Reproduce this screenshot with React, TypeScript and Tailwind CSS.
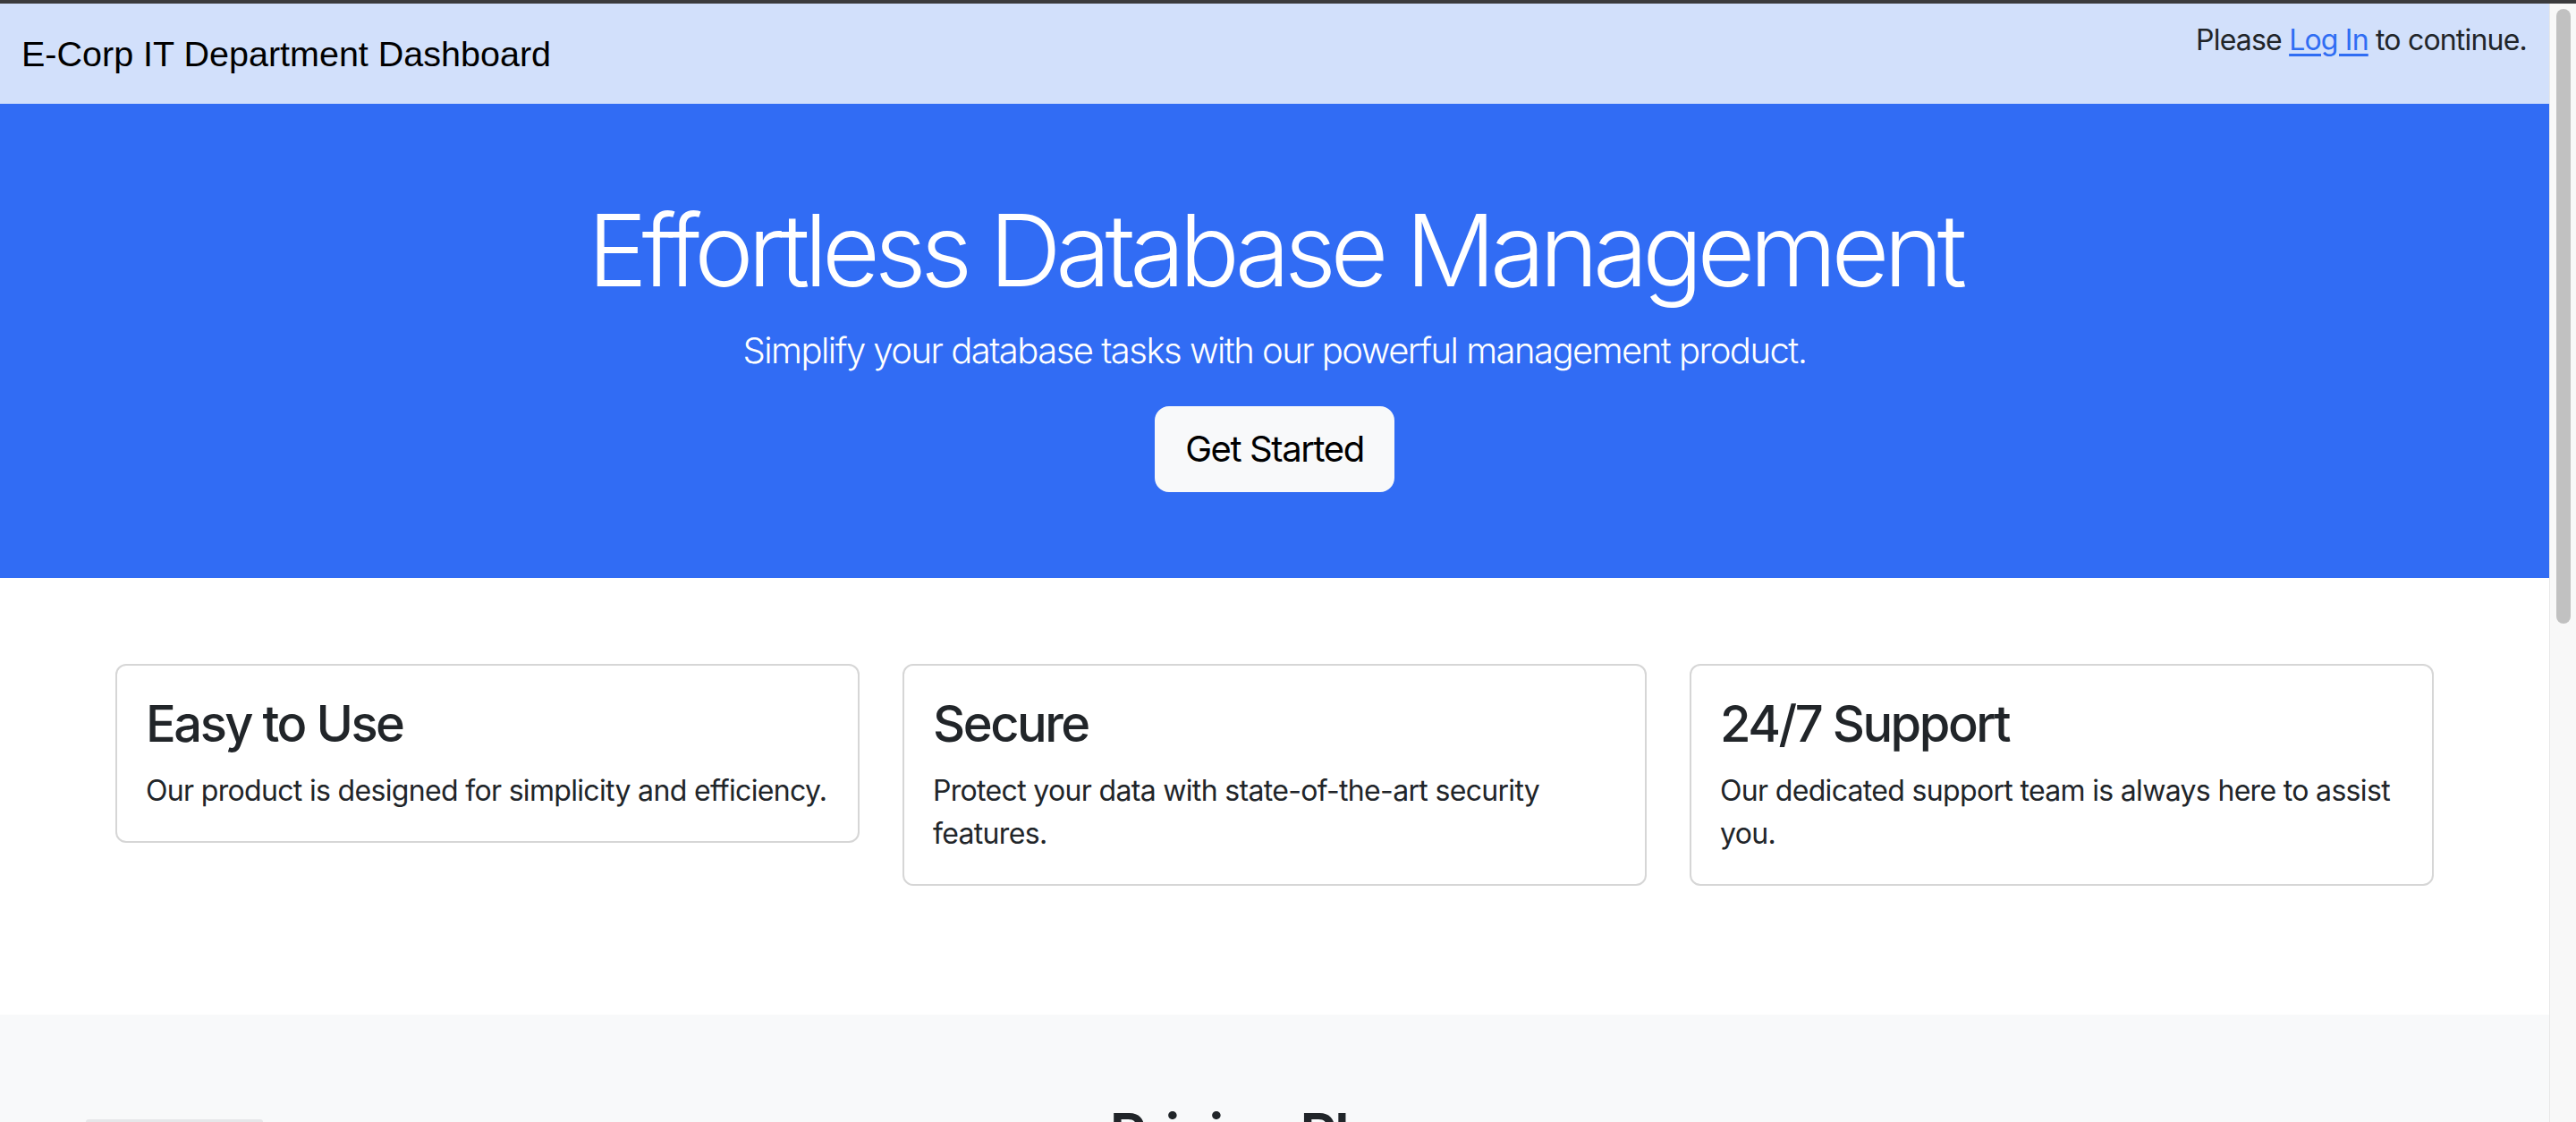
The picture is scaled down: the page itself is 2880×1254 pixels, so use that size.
import React from "react";

const sans = { fontFamily: 'Inter, "Noto Sans", "Liberation Sans", sans-serif' };

function FeatureCard({ title, text }: { title: string; text: string }) {
  return (
    <div className="mb-12 rounded-xl border-2 border-[#d6d6d6] bg-white p-8 text-[#212529]">
      <h3 className="mb-4 text-[56px] font-medium leading-[1.2] tracking-[-0.044em]">{title}</h3>
      <p className="text-[32px] leading-[48px] tracking-[-0.021em]">{text}</p>
    </div>
  );
}

export default function App() {
  return (
    <div className="relative flex h-[1254px] w-[2880px] flex-col overflow-hidden bg-white" style={sans}>
      <div className="h-[4px] shrink-0 bg-[#3b3b3d]" />
      <div className="flex min-h-0 flex-1">
        <main className="min-w-0 flex-1 overflow-hidden">
          <header className="flex h-[112px] justify-between bg-[#d2e0fb] pl-6 pr-[25px]">
            <div
              className="self-center text-[39.5px] leading-[60px] text-black"
              style={{ fontFamily: '"Liberation Sans", Arial, sans-serif' }}
            >
              E-Corp IT Department Dashboard
            </div>
            <div className="pt-[17px] text-[32px] leading-[48px] tracking-[-0.025em] text-[#212529]">
              Please{" "}
              <a href="#" className="text-[#2f6df3] underline underline-offset-[4px]">
                Log In
              </a>{" "}
              to continue.
            </div>
          </header>

          <section className="bg-[#316cf4] py-[96px] text-center text-white">
            <h1 className="mb-4 text-[112px] font-light leading-[1.2] tracking-[-0.056em]">
              Effortless Database Management
            </h1>
            <p className="mb-8 text-[40px] font-light leading-[60px] tracking-[-0.038em]">
              Simplify your database tasks with our powerful management product.
            </p>
            <button className="rounded-2xl border-2 border-[#f8f9fa] bg-[#f8f9fa] px-8 py-4 text-[40px] leading-[60px] tracking-[-0.035em] text-black">
              Get Started
            </button>
          </section>

          <section className="py-[96px]">
            <div className="mx-auto grid w-[2640px] grid-cols-3 items-start gap-x-12 px-6">
              <FeatureCard title="Easy to Use" text="Our product is designed for simplicity and efficiency." />
              <FeatureCard
                title="Secure"
                text="Protect your data with state-of-the-art security features."
              />
              <FeatureCard
                title="24/7 Support"
                text="Our dedicated support team is always here to assist you."
              />
            </div>
          </section>

          <section className="bg-[#f8f9fa] pt-[96px]">
            <h2 className="text-center text-[64px] font-semibold leading-[1.2] tracking-[-0.04em] text-[#212529]">
              Pricing Plans
            </h2>
          </section>
        </main>

        <div className="relative w-[30px] shrink-0 border-l border-[#e8e8e8] bg-[#f8f8f8]">
          <div className="absolute left-[7px] top-[6px] h-[687px] w-[16px] rounded-full bg-[#c1c1c1]" />
        </div>
      </div>
      <div className="absolute bottom-0 left-[96px] h-[3px] w-[198px] rounded-t bg-[#e6e7e9]" />
    </div>
  );
}
